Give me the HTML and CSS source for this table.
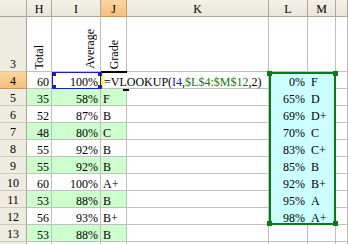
FILE: index.html
```html
<!DOCTYPE html>
<html>
<head>
<meta charset="utf-8">
<link rel="stylesheet" href="styles.css">
</head>
<body>
<div class="sheet">
  <!-- column headers -->
  <div class="ch corner"></div>
  <div class="ch">H</div>
  <div class="ch">I</div>
  <div class="ch sel">J</div>
  <div class="ch">K</div>
  <div class="ch">L</div>
  <div class="ch">M</div>
  <div class="ch"></div>

  <!-- lookup range L4:M12 -->
  <div class="lookup">
    <span class="h tl"></span><span class="h tr"></span><span class="h bl"></span><span class="h br"></span>
    <div class="lv">0%</div><div class="lg">F</div>
    <div class="lv">65%</div><div class="lg">D</div>
    <div class="lv">69%</div><div class="lg">D+</div>
    <div class="lv">70%</div><div class="lg">C</div>
    <div class="lv">83%</div><div class="lg">C+</div>
    <div class="lv">85%</div><div class="lg">B</div>
    <div class="lv">92%</div><div class="lg">B+</div>
    <div class="lv">95%</div><div class="lg">A</div>
    <div class="lv">98%</div><div class="lg">A+</div>
  </div>

  <!-- row 3 -->
  <div class="rh bottom">3</div>
  <div class="c rot center"><span class="v">Total</span></div>
  <div class="c rot right"><span class="v">Average</span></div>
  <div class="c rot center"><span class="v">Grade</span></div>
  <div class="c"></div><div class="c"></div><div class="c"></div><div class="c"></div>

  <!-- row 4 -->
  <div class="rh sel">4</div>
  <div class="c n">60</div>
  <div class="c n ref"><span class="h tl"></span><span class="h tr"></span><span class="h bl"></span><span class="h br"></span>100%</div>
  <div class="c edit">=VLOOKUP(<span class="r1">I4</span>,<span class="r2">$L$4:$M$12</span>,2)</div>
  <div class="c"></div>

  <div class="rh">5</div><div class="c n g">35</div><div class="c n g">58%</div><div class="c t g">F</div><div class="c"></div><div class="c"></div>
  <div class="rh">6</div><div class="c n">52</div><div class="c n">87%</div><div class="c t">B</div><div class="c"></div><div class="c"></div>
  <div class="rh">7</div><div class="c n g">48</div><div class="c n g">80%</div><div class="c t g">C</div><div class="c"></div><div class="c"></div>
  <div class="rh">8</div><div class="c n">55</div><div class="c n">92%</div><div class="c t">B</div><div class="c"></div><div class="c"></div>
  <div class="rh">9</div><div class="c n g">55</div><div class="c n g">92%</div><div class="c t g">B</div><div class="c"></div><div class="c"></div>
  <div class="rh">10</div><div class="c n">60</div><div class="c n">100%</div><div class="c t">A+</div><div class="c"></div><div class="c"></div>
  <div class="rh">11</div><div class="c n g">53</div><div class="c n g">88%</div><div class="c t g">B</div><div class="c"></div><div class="c"></div>
  <div class="rh">12</div><div class="c n">56</div><div class="c n">93%</div><div class="c t">B+</div><div class="c"></div><div class="c"></div>
  <div class="rh">13</div><div class="c n g">53</div><div class="c n g">88%</div><div class="c t g">B</div><div class="c"></div><div class="c"></div><div class="c"></div><div class="c"></div>
  <div class="rh"></div><div class="c"></div><div class="c"></div><div class="c"></div><div class="c"></div><div class="c"></div><div class="c"></div><div class="c"></div>
</div>
</body>
</html>
```

FILE: styles.css
```css
html, body {
  margin: 0;
  padding: 0;
  background: #ffffff;
}
body {
  width: 348px;
  height: 244px;
  overflow: hidden;
  font-family: "Liberation Serif", "Times New Roman", serif;
  font-size: 12px;
  color: #000;
}
.sheet {
  display: grid;
  grid-template-columns: 27px 25px 49px 26px 142px 39px 28px 12px;
  grid-template-rows: 17px 55px;
  grid-auto-rows: 17px;
  height: 244px;
  overflow: hidden;
}
.sheet > div {
  box-sizing: border-box;
  white-space: nowrap;
}
.ch {
  background: linear-gradient(#f3f1e8, #e9e7db);
  border-right: 1px solid #aca899;
  border-bottom: 1px solid #aca899;
  text-align: center;
  line-height: 14px;
  padding-top: 2px;
}
.ch.sel, .rh.sel {
  background: linear-gradient(#fbd59f, #f6bf7d);
  border-color: #c79a5c;
}
.rh {
  background: #eeece1;
  border-right: 1px solid #aca899;
  border-bottom: 1px solid #cfcbbb;
  text-align: center;
  line-height: 14px;
  padding-top: 2px;
}
.rh.bottom {
  display: flex;
  align-items: flex-end;
  justify-content: center;
  padding-top: 0;
}
.c {
  border-right: 1px solid #c0c0c0;
  border-bottom: 1px solid #c0c0c0;
  line-height: 14px;
  padding-top: 3px;
}
.n {
  text-align: right;
  padding-right: 2px;
}
.t {
  padding-left: 2px;
}
.g {
  background: #ccffcc;
}
.rot {
  display: flex;
  align-items: flex-end;
  padding: 0 0 2px 0;
}
.rot.center {
  justify-content: center;
}
.rot.right {
  justify-content: flex-end;
  padding-right: 3px;
}
.v {
  writing-mode: vertical-rl;
  transform: rotate(180deg);
  line-height: 14px;
}
.ref {
  position: relative;
  border: 1px solid #1c1ccc;
  padding-top: 2px;
}
.edit {
  grid-column: span 2;
  position: relative;
  background: #fff;
  border-left: 2px solid #ffff00;
  padding-left: 1px;
}
.edit::before {
  content: "";
  position: absolute;
  left: -2px;
  top: -1px;
  width: 26px;
  height: 2px;
  background: #000;
}
.edit::after {
  content: "";
  position: absolute;
  left: 20px;
  bottom: -3px;
  width: 6px;
  height: 2px;
  background: #000;
}
.r1 { color: #1c1cb0; }
.r2 { color: #0a7a0a; }
.lookup {
  grid-column: 6 / 8;
  grid-row: 3 / 12;
  position: relative;
  background: #ccffff;
  display: grid;
  grid-template-columns: 39px 28px;
  grid-auto-rows: 17px;
  z-index: 1;
}
.lookup::after {
  content: "";
  position: absolute;
  inset: 0;
  border: 2px solid #0d7a12;
  pointer-events: none;
}
.lv, .lg {
  line-height: 14px;
  padding-top: 3px;
}
.lv {
  text-align: right;
  padding-right: 3px;
}
.lg {
  padding-left: 3px;
}
.h {
  position: absolute;
  width: 5px;
  height: 5px;
  z-index: 2;
}
.lookup .h { background: #0d7a12; }
.ref .h { background: #1c1ccc; width: 4px; height: 4px; }
.lookup .tl { left: -2px; top: -1px; }
.lookup .tr { right: -2px; top: -1px; }
.lookup .bl { left: -2px; bottom: -1px; }
.lookup .br { right: -2px; bottom: -1px; }
.ref .tl { left: -1px; top: -1px; }
.ref .tr { right: -2px; top: -1px; }
.ref .bl { left: -1px; bottom: -1px; }
.ref .br { right: -2px; bottom: -1px; }
```
